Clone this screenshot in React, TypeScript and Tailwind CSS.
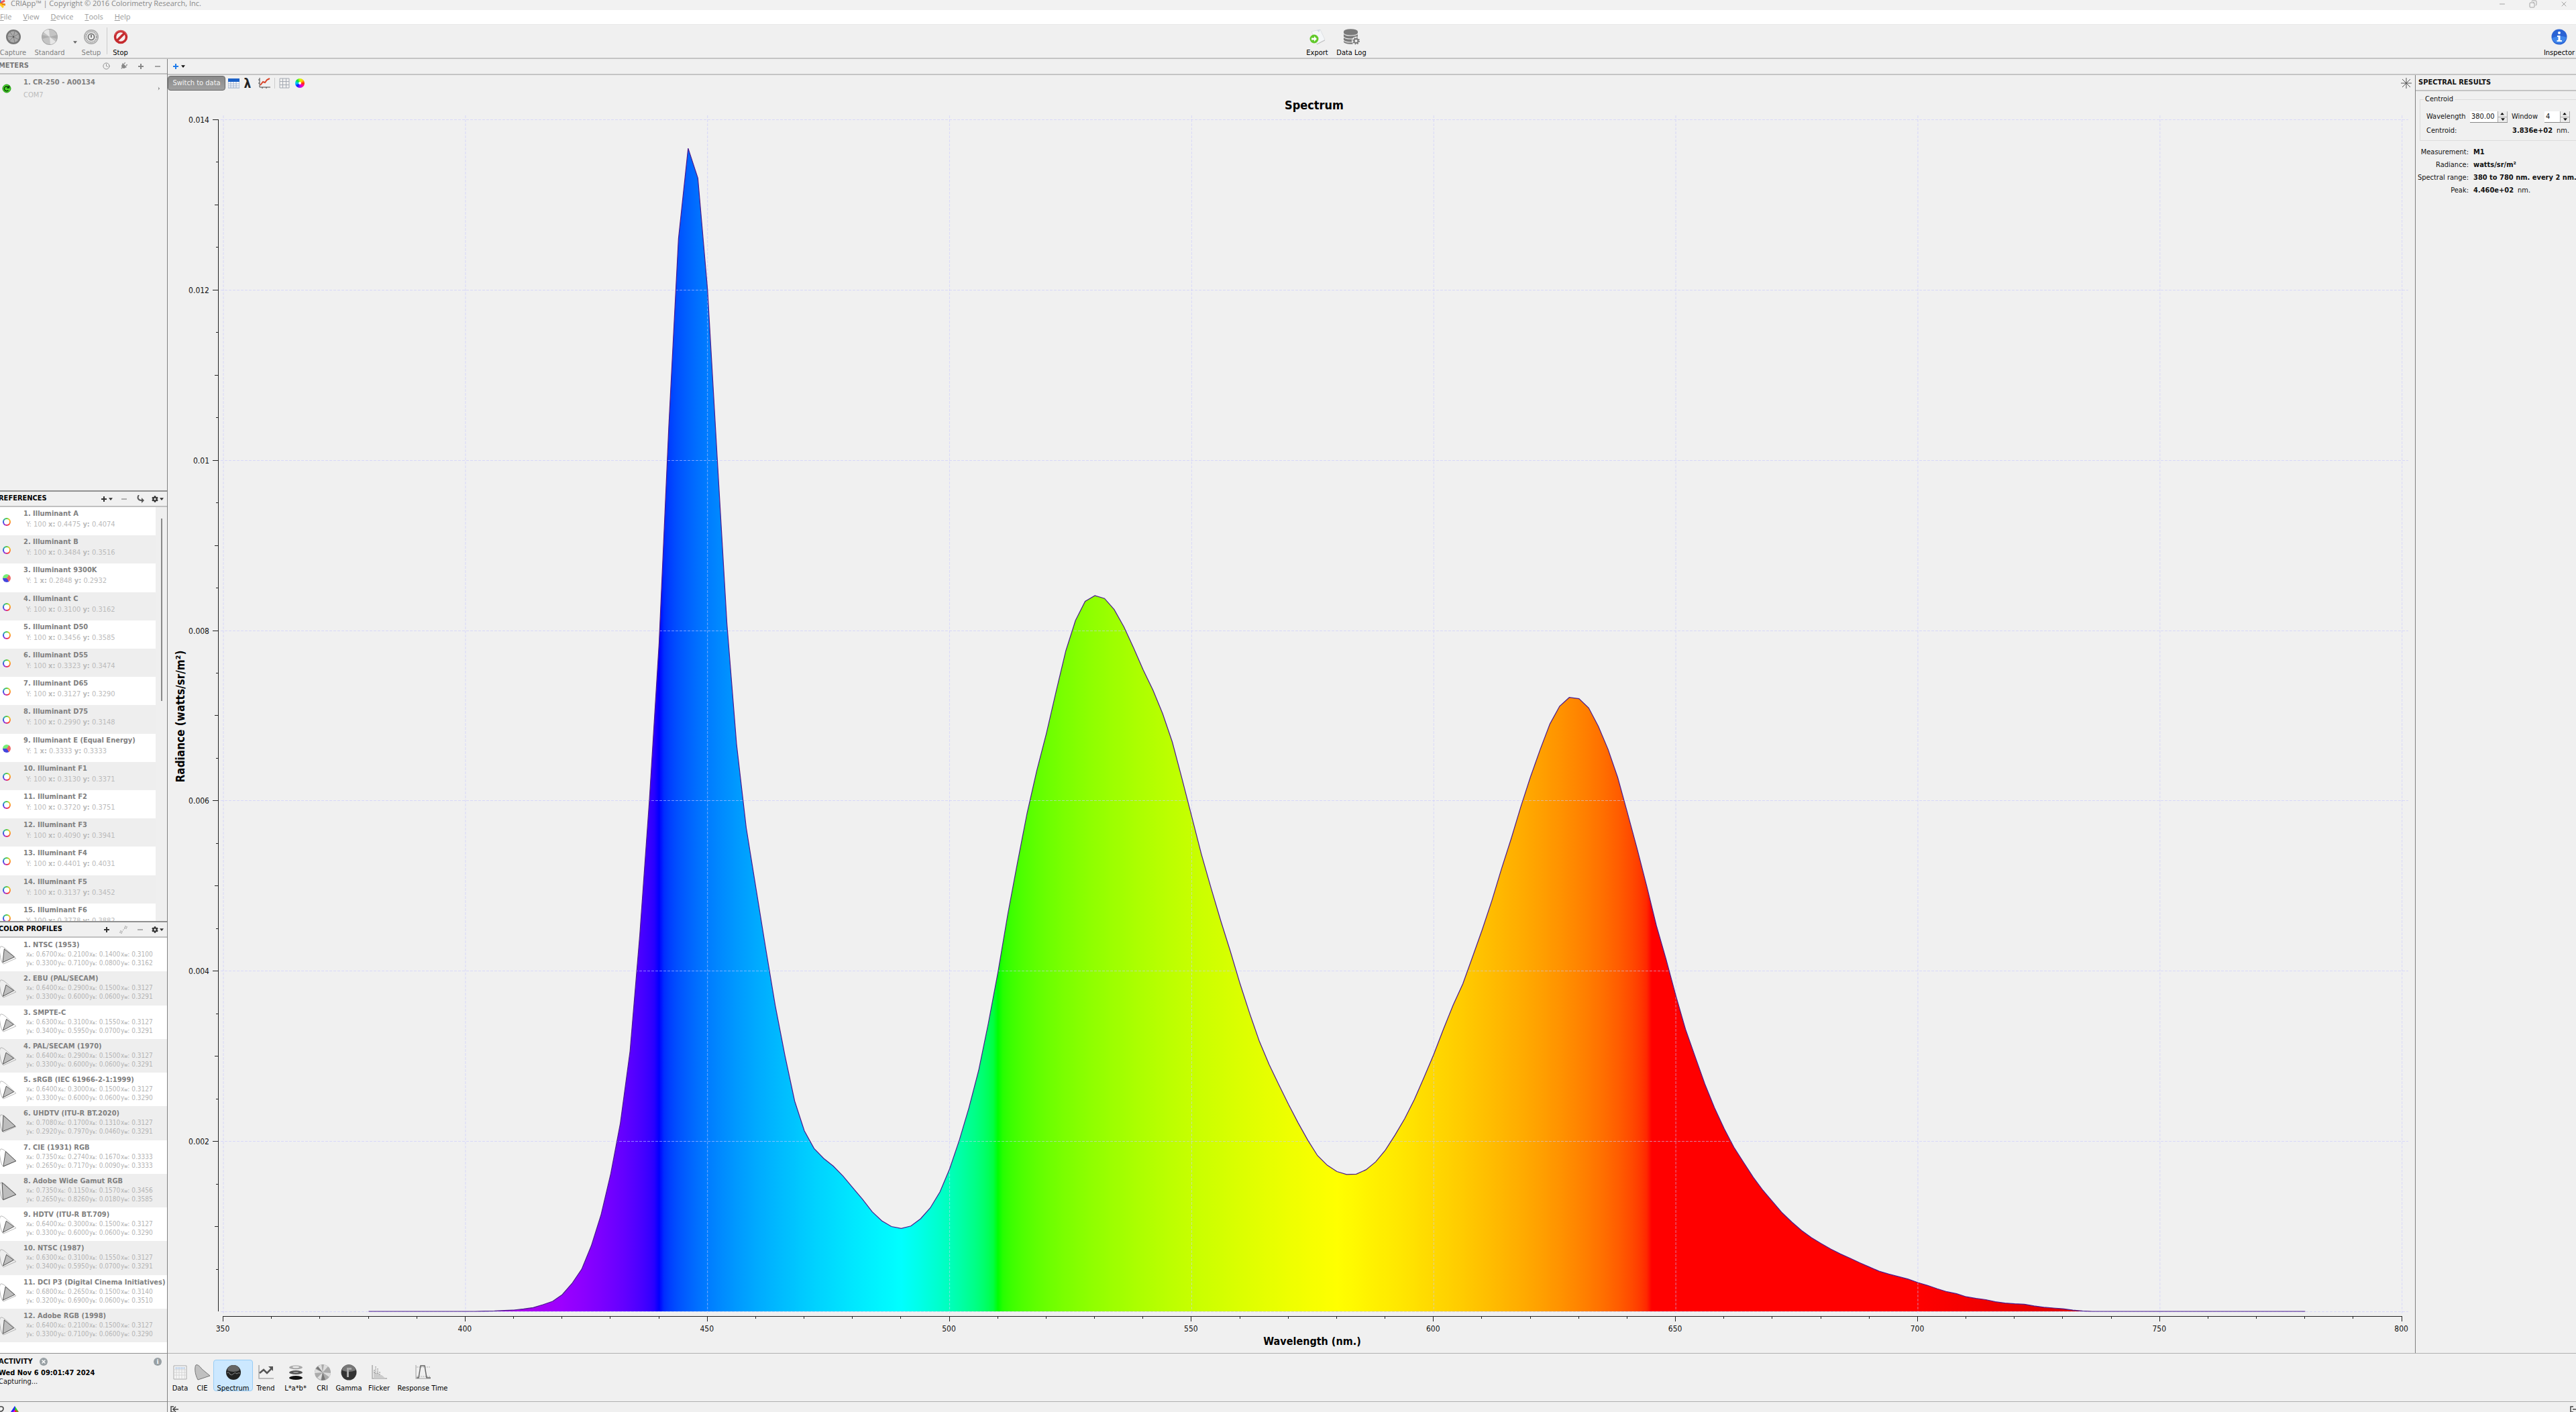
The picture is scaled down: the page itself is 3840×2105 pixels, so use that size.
import type { ReactNode } from 'react';
import { ChevronRight, Clock, Copy, Minus, X } from 'lucide-react';
import { FaCog, FaPlug } from 'react-icons/fa';

const references = [
  ['Illuminant A', '100', '0.4475', '0.4074'],
  ['Illuminant B', '100', '0.3484', '0.3516'],
  ['Illuminant 9300K', '1', '0.2848', '0.2932'],
  ['Illuminant C', '100', '0.3100', '0.3162'],
  ['Illuminant D50', '100', '0.3456', '0.3585'],
  ['Illuminant D55', '100', '0.3323', '0.3474'],
  ['Illuminant D65', '100', '0.3127', '0.3290'],
  ['Illuminant D75', '100', '0.2990', '0.3148'],
  ['Illuminant E (Equal Energy)', '1', '0.3333', '0.3333'],
  ['Illuminant F1', '100', '0.3130', '0.3371'],
  ['Illuminant F2', '100', '0.3720', '0.3751'],
  ['Illuminant F3', '100', '0.4090', '0.3941'],
  ['Illuminant F4', '100', '0.4401', '0.4031'],
  ['Illuminant F5', '100', '0.3137', '0.3452'],
  ['Illuminant F6', '100', '0.3778', '0.3882'],
];

// x then y chromaticities, in the order R, G, B, W
const profiles: { name: string; x: string[]; y: string[] }[] = [
  { name: 'NTSC (1953)', x: ['0.6700', '0.2100', '0.1400', '0.3100'], y: ['0.3300', '0.7100', '0.0800', '0.3162'] },
  { name: 'EBU (PAL/SECAM)', x: ['0.6400', '0.2900', '0.1500', '0.3127'], y: ['0.3300', '0.6000', '0.0600', '0.3291'] },
  { name: 'SMPTE-C', x: ['0.6300', '0.3100', '0.1550', '0.3127'], y: ['0.3400', '0.5950', '0.0700', '0.3291'] },
  { name: 'PAL/SECAM (1970)', x: ['0.6400', '0.2900', '0.1500', '0.3127'], y: ['0.3300', '0.6000', '0.0600', '0.3291'] },
  { name: 'sRGB (IEC 61966-2-1:1999)', x: ['0.6400', '0.3000', '0.1500', '0.3127'], y: ['0.3300', '0.6000', '0.0600', '0.3290'] },
  { name: 'UHDTV (ITU-R BT.2020)', x: ['0.7080', '0.1700', '0.1310', '0.3127'], y: ['0.2920', '0.7970', '0.0460', '0.3291'] },
  { name: 'CIE (1931) RGB', x: ['0.7350', '0.2740', '0.1670', '0.3333'], y: ['0.2650', '0.7170', '0.0090', '0.3333'] },
  { name: 'Adobe Wide Gamut RGB', x: ['0.7350', '0.1150', '0.1570', '0.3456'], y: ['0.2650', '0.8260', '0.0180', '0.3585'] },
  { name: 'HDTV (ITU-R BT.709)', x: ['0.6400', '0.3000', '0.1500', '0.3127'], y: ['0.3300', '0.6000', '0.0600', '0.3290'] },
  { name: 'NTSC (1987)', x: ['0.6300', '0.3100', '0.1550', '0.3127'], y: ['0.3400', '0.5950', '0.0700', '0.3291'] },
  { name: 'DCI P3 (Digital Cinema Initiatives)', x: ['0.6800', '0.2650', '0.1500', '0.3140'], y: ['0.3200', '0.6900', '0.0600', '0.3510'] },
  { name: 'Adobe RGB (1998)', x: ['0.6400', '0.2100', '0.1500', '0.3127'], y: ['0.3300', '0.7100', '0.0600', '0.3290'] },
];

const locus = [
  [0.174, 0.005], [0.144, 0.03], [0.124, 0.058], [0.091, 0.133], [0.045, 0.295], [0.008, 0.538],
  [0.004, 0.655], [0.014, 0.75], [0.039, 0.812], [0.074, 0.834], [0.155, 0.806], [0.23, 0.754],
  [0.302, 0.692], [0.373, 0.624], [0.512, 0.487], [0.627, 0.372], [0.735, 0.265],
];

// radiance in mW/sr/m² every 2 nm, starting at 400 nm
const FIRST_NM = 400;
const radiance = [
  0, 0, 0.002, 0.005, 0.01, 0.016, 0.028, 0.045, 0.079, 0.118, 0.197, 0.327, 0.495, 0.771, 1.132, 1.616,
  2.213, 3.057, 4.42, 6.013, 7.85, 10.4, 12.6, 13.66, 13.31, 12.0, 10.03, 8.08, 6.66, 5.68, 4.97, 4.27,
  3.59, 3.0, 2.47, 2.122, 1.914, 1.796, 1.706, 1.588, 1.453, 1.318, 1.171, 1.064, 0.997, 0.974, 1.002,
  1.087, 1.216, 1.402, 1.672, 2.01, 2.393, 2.832, 3.384, 3.986, 4.66, 5.265, 5.85, 6.351, 6.79, 7.28,
  7.759, 8.114, 8.339, 8.406, 8.373, 8.243, 8.04, 7.793, 7.534, 7.297, 7.021, 6.689, 6.256, 5.816, 5.372,
  4.972, 4.589, 4.229, 3.846, 3.497, 3.17, 2.9, 2.663, 2.432, 2.213, 2.01, 1.83, 1.717, 1.643, 1.608,
  1.613, 1.663, 1.756, 1.894, 2.071, 2.263, 2.489, 2.75, 3.02, 3.315, 3.596, 3.847, 4.161, 4.481, 4.825,
  5.199, 5.553, 5.932, 6.281, 6.601, 6.901, 7.108, 7.211, 7.196, 7.088, 6.872, 6.601, 6.271, 5.858, 5.435,
  4.993, 4.53, 4.132, 3.709, 3.315, 2.991, 2.671, 2.391, 2.145, 1.928, 1.751, 1.574, 1.422, 1.289, 1.156,
  1.048, 0.949, 0.866, 0.797, 0.733, 0.674, 0.625, 0.571, 0.521, 0.472, 0.438, 0.408, 0.379, 0.339, 0.305,
  0.266, 0.231, 0.207, 0.172, 0.152, 0.138, 0.113, 0.098, 0.089, 0.084, 0.064, 0.049, 0.039, 0.03, 0.015,
  0.005, 0,
];

const toX = (nm: number) => 83 + (nm - 350) * 7.217;
const toY = (value: number) => 1783 - value * 126.93;

const wavelengthColor = (nm: number) => {
  let r = 0;
  let g = 0;
  let b = 0;
  if (nm < 440) {
    r = (440 - nm) / 60;
    b = 1;
  } else if (nm < 490) {
    g = (nm - 440) / 50;
    b = 1;
  } else if (nm < 510) {
    g = 1;
    b = (510 - nm) / 20;
  } else if (nm < 580) {
    r = (nm - 510) / 70;
    g = 1;
  } else if (nm < 645) {
    r = 1;
    g = (645 - nm) / 65;
  } else {
    r = 1;
  }
  let fade = 1;
  if (nm < 420) fade = 0.3 + (0.7 * (nm - 380)) / 40;
  if (nm > 700) fade = 0.3 + (0.7 * (780 - nm)) / 80;
  const channel = (c: number) => Math.round(255 * Math.pow(c * fade, 0.45));
  return `rgb(${channel(r)},${channel(g)},${channel(b)})`;
};

const range = (from: number, to: number, step: number) =>
  Array.from({ length: Math.round((to - from) / step) + 1 }, (_, i) => from + i * step);

const Spectrum = () => {
  const points = radiance.map((v, i) => `${toX(FIRST_NM + i * 2).toFixed(1)},${toY(v).toFixed(1)}`).join(' ');
  const line = `${toX(380)},1783 ${points} ${toX(780)},1783`;

  return (
    <svg viewBox="0 0 3350 1845" className="min-h-0 w-full flex-1" role="img" aria-label="Spectrum chart">
      <defs>
        <linearGradient id="visible" gradientUnits="userSpaceOnUse" x1={toX(380)} y1="0" x2={toX(780)} y2="0">
          {range(380, 780, 1).map((nm) => (
            <stop key={nm} offset={(nm - 380) / 400} stopColor={wavelengthColor(nm)} />
          ))}
        </linearGradient>
      </defs>
      <polygon points={line} fill="url(#visible)" />

      {/* grid */}
      <g stroke="#c8c8ff" strokeOpacity="0.6" strokeDasharray="4 2" strokeWidth="1">
        {range(350, 800, 50).map((nm) => (
          <line key={nm} x1={toX(nm)} x2={toX(nm)} y1="0" y2="1787" />
        ))}
        {range(0, 14, 2).map((v) => (
          <line key={v} x1="79" x2="3340" y1={Math.round(toY(v)) + 0.5} y2={Math.round(toY(v)) + 0.5} />
        ))}
      </g>
      <polyline points={line} fill="none" stroke="#4b1a8e" strokeWidth="1.2" />

      {/* axes */}
      <g stroke="#222" strokeWidth="1">
        <line x1="75.5" x2="75.5" y1="6" y2="1783" />
        {range(0.5, 14, 0.5).map((v) => (
          <line key={v} x1={v % 2 === 0 ? 67 : v % 1 === 0 ? 70 : 72} x2="76" y1={Math.round(toY(v)) + 0.5} y2={Math.round(toY(v)) + 0.5} />
        ))}
        <line x1={toX(350)} x2={toX(800)} y1="1790.5" y2="1790.5" />
        {range(350, 800, 10).map((nm) => (
          <line key={nm} x1={Math.round(toX(nm)) - 0.5} x2={Math.round(toX(nm)) - 0.5} y1="1790" y2={nm % 50 === 0 ? 1798 : 1794} />
        ))}
      </g>
      <g className="fill-[#111] text-[12px]">
        {range(2, 14, 2).map((v) => (
          <text key={v} x="62" y={toY(v) + 5} textAnchor="end">{String(v / 1000)}</text>
        ))}
        {range(350, 800, 50).map((nm) => (
          <text key={nm} x={toX(nm) - 1} y="1813" textAnchor="middle">{nm}</text>
        ))}
      </g>
      <g className="fill-black text-[16px] font-bold">
        <text x="1706" y="1833" textAnchor="middle">Wavelength (nm.)</text>
        <text transform="translate(25 896) rotate(-90)" textAnchor="middle" className="text-[17px]">Radiance (watts/sr/m²)</text>
      </g>
    </svg>
  );
};

const Caret = () => (
  <svg viewBox="0 0 8 5" className="h-1 w-1.5 shrink-0"><path d="M0 0h8L4 5z" fill="currentColor" /></svg>
);

const Plus = () => (
  <svg viewBox="0 0 10 10" className="size-2.5"><path d="M5 1v8M1 5h8" stroke="currentColor" strokeWidth="2" /></svg>
);

const Dash = () => (
  <svg viewBox="0 0 10 10" className="size-2.5"><path d="M1 5h8" stroke="currentColor" strokeWidth="1.5" /></svg>
);

const RingIcon = () => (
  <span className="block size-3 rounded-full bg-[conic-gradient(#5c4,#ec2,#f83,#f33,#a3c,#44e,#2aa,#5c4)] p-0.5">
    <span className="block size-2 rounded-full bg-white" />
  </span>
);

const PieIcon = () => (
  <span className="block size-3 rounded-full bg-[conic-gradient(#7e7_0_35deg,#e66_35deg_145deg,#44d_145deg_270deg,#7e7_270deg)]" />
);

const GamutIcon = ({ x, y }: { x: string[]; y: string[] }) => {
  const place = (px: number, py: number) => `${(px * 33.3 - 0.7).toFixed(1)},${(39.2 - py * 31.7).toFixed(1)}`;
  const triangle = [0, 1, 2].map((i) => place(Number(x[i]), Number(y[i]))).join(' ');
  return (
    <svg viewBox="0 0 35 50" className="h-[50px] w-[35px] shrink-0">
      <polygon points={locus.map(([a, b]) => place(a, b)).join(' ')} fill="none" stroke="#999" strokeWidth="0.7" />
      <polygon points={triangle} fill="#bdbdbd" stroke="#333" strokeWidth="0.8" />
    </svg>
  );
};

const ToolButton = ({ label, width, dim, children }: { label: string; width: string; dim?: boolean; children: ReactNode }) => (
  <button className={`flex h-[49px] shrink-0 flex-col items-center gap-1 pt-1.5 leading-4 whitespace-nowrap ${width} ${dim ? 'text-[#808080]' : 'text-black'}`}>
    <svg viewBox="0 0 24 24" className="size-6 shrink-0">{children}</svg>
    {label}
  </button>
);

const PanelHeader = ({ title, dim, children }: { title: string; dim?: boolean; children?: ReactNode }) => (
  <header className="flex h-[23px] shrink-0 items-center justify-between overflow-hidden border-b-2 border-[#c0c0c0] pr-[5px]">
    <h2 className={`-ml-0.5 font-bold ${dim ? 'text-[#777]' : 'text-black'}`}>{title}</h2>
    <div className="flex items-center">{children}</div>
  </header>
);

const AppToolbar = () => (
  <div className="flex h-[51px] shrink-0 items-start border-b-2 border-[#c4c4c4]">
    <div className="flex flex-1 items-start">
      <ToolButton label="Capture" width="w-[39px]" dim>
        <circle cx="12" cy="12" r="11" fill="#777" />
        <circle cx="12" cy="12" r="8.5" fill="#aaa" />
        <path d="M12 12 14 4M12 12l7-4M12 12l8 4M12 12l2 8M12 12l-6 6M12 12l-8-1M12 12 7 5" stroke="#777" strokeWidth="0.8" />
        <circle cx="12" cy="12" r="1" fill="#444" />
      </ToolButton>
      <ToolButton label="Standard" width="w-[70px]" dim>
        <circle cx="12" cy="12" r="12" fill="#a5a5a5" />
        <circle cx="12" cy="12" r="11" fill="#c4c4c4" />
        <path d="M12 12 3 5a11 11 0 0 1 8-4zM12 12l9 7a11 11 0 0 1-8 4z" fill="#e6e6e6" />
        <path d="M12 12 23 9v6zM12 12 1 15V9z" fill="#adadad" />
      </ToolButton>
      <button className="mt-6 w-2 text-[#666]" aria-label="Standard options"><Caret /></button>
      <ToolButton label="Setup" width="w-[38px]" dim>
        <circle cx="12" cy="12" r="11" fill="#aaa" />
        <circle cx="12" cy="12" r="9.5" fill="#ddd" />
        <circle cx="12" cy="12" r="8" fill="none" stroke="#777" strokeDasharray="2 1" />
        <circle cx="12" cy="12" r="4.5" fill="#eee" stroke="#666" strokeWidth="1.5" />
        <path d="M12 9v4" stroke="#555" strokeWidth="1.5" />
      </ToolButton>
      <span className="mt-1 ml-1 h-10 w-px bg-[#ccc]" />
      <ToolButton label="Stop" width="w-[39px]">
        <circle cx="12" cy="12" r="8.5" fill="#f6eeee" stroke="#c52a2e" strokeWidth="3.5" />
        <path d="m6 18 12-12" stroke="#c52a2e" strokeWidth="3.5" />
        <path d="M3.500 9a9 9 0 0 1 17 0" stroke="#e0686a" strokeWidth="1" fill="none" />
      </ToolButton>
    </div>
    <div className="ml-[143px] flex">
      <ToolButton label="Export" width="w-[46px]">
        <path d="m3 4 13-3 7 15-12 7z" fill="#f4f6f8" stroke="#d5d8dc" strokeWidth="0.7" />
        <path d="m11 2 3 3 2-4z" fill="#cfd8e4" />
        <path d="m11 23 12-6" stroke="#bbb" />
        <circle cx="7" cy="15" r="6.500" fill="#62c92c" />
        <path d="M3 13.500h4V11l4 4-4 4v-2.500H3z" fill="#fff" />
      </ToolButton>
      <ToolButton label="Data Log" width="w-[56px]">
        <path d="M0 4v15c0 5 21 5 21 0V4z" fill="#7a7a7a" />
        <path d="M0 7c2 4 19 4 21 0M0 12c2 4 19 4 21 0M0 17c2 4 19 4 21 0" stroke="#f0f0f0" strokeWidth="1.200" fill="none" />
        <ellipse cx="10.500" cy="4" rx="10.500" ry="3.800" fill="#7a7a7a" />
        <circle cx="18.500" cy="18" r="6.500" fill="#f0f0f0" />
        <circle cx="18.500" cy="18" r="3" fill="none" stroke="#7a7a7a" strokeWidth="2" />
        <circle cx="18.500" cy="18" r="4.500" fill="none" stroke="#7a7a7a" strokeWidth="2" strokeDasharray="1.770" />
      </ToolButton>
    </div>
    <div className="flex flex-1 justify-end">
      <ToolButton label="Inspector" width="w-[50px]">
        <circle cx="12" cy="12" r="11.500" fill="#2a63d4" />
        <path d="M1 14a11.500 11.500 0 0 0 22-1c-7-3-15-3-22 1z" fill="#3f86ea" />
        <circle cx="12" cy="6" r="2" fill="#fff" />
        <path d="M9 10h4.500v7H16v2H8.500v-2h2v-5H9z" fill="#fff" />
      </ToolButton>
    </div>
  </div>
);

const Sidebar = () => (
  <aside className="flex w-[250px] shrink-0 flex-col overflow-hidden border-r border-[#808080]">
    <section className="flex min-h-0 flex-1 flex-col">
      <PanelHeader title="METERS" dim>
        <div className="flex items-center gap-[15px] pr-1 text-[#888]">
          <button aria-label="History"><Clock className="size-[11px]" /></button>
          <button aria-label="Connect"><FaPlug className="size-[11px] rotate-45" /></button>
          <button aria-label="Add meter"><Plus /></button>
          <button aria-label="Remove meter"><Dash /></button>
        </div>
      </PanelHeader>
      <div className="flex h-[42px] items-center">
        <svg viewBox="0 0 14 14" className="mr-[18px] ml-[3px] size-3.5 shrink-0">
          <circle cx="7" cy="7" r="6" fill="#4fdc2c" stroke="#1f9a14" />
          <path d="M9.500 9.500A3.500 3.500 0 1 1 10 5.500M10.500 2.500v3.500H7" stroke="#0a3d08" strokeWidth="1.500" fill="none" />
        </svg>
        <div className="flex-1">
          <p className="leading-5 font-bold text-[#808080]">1. CR-250 - A00134</p>
          <p className="leading-[18px] text-[#bbb]">COM7</p>
        </div>
        <ChevronRight className="mr-2 size-2 fill-[#999] text-[#999]" />
      </div>
    </section>

    <section className="flex h-[642px] shrink-0 flex-col border-t-2 border-[#909090]">
      <PanelHeader title="REFERENCES">
        <div className="flex items-center text-[#333]">
          <button className="flex items-center gap-0.5" aria-label="Add reference"><Plus /><Caret /></button>
          <button className="ml-3 text-[#999]" aria-label="Remove reference"><Dash /></button>
          <button className="ml-3.5" aria-label="Load">
            <svg viewBox="0 0 12 12" className="size-3"><path d="M3 0C0 4 2 8 7 8" stroke="#555" strokeWidth="2" fill="none" /><path d="M7 4v8l4-4z" fill="#555" /></svg>
          </button>
          <button className="ml-2.5 flex items-center gap-0.5" aria-label="Reference settings"><FaCog className="size-2.5" /><Caret /></button>
        </div>
      </PanelHeader>
      <div className="flex min-h-0 flex-1 overflow-hidden">
        <ul className="grid h-[633px] flex-1 auto-rows-fr bg-white">
          {references.map(([name, lum, x, y], i) => (
            <li key={name} className="flex items-start even:bg-[#eeeeee]">
              <span className="mr-[19px] ml-1 pt-4">{lum === '1' ? <PieIcon /> : <RingIcon />}</span>
              <div className="pt-0.5 whitespace-nowrap">
                <p className="leading-4 font-bold text-[#808080]">{i + 1}. {name}</p>
                <p className="pl-1 leading-4 text-[#bbb]">Y: {lum} <b>x:</b> {x} <b>y:</b> {y}</p>
              </div>
            </li>
          ))}
        </ul>
        <div className="w-[17px] bg-[#efefef] pt-[17px] pl-2">
          <div className="h-[272px] w-0.5 bg-[#888]" />
        </div>
      </div>
    </section>

    <section className="flex h-[644px] shrink-0 flex-col border-t-2 border-[#909090]">
      <PanelHeader title="COLOR PROFILES">
        <div className="flex items-center text-[#333]">
          <button aria-label="Add profile"><Plus /></button>
          <button className="ml-3.5" aria-label="Expand">
            <svg viewBox="0 0 12 12" className="size-3"><path d="M8 1h3v3H8zM1 8h3v3H1zM5 7l3-3" stroke="#999" strokeDasharray="2 1" fill="none" /></svg>
          </button>
          <button className="ml-3.5 text-[#999]" aria-label="Remove profile"><Dash /></button>
          <button className="ml-3 flex items-center gap-0.5" aria-label="Profile settings"><FaCog className="size-2.5" /><Caret /></button>
        </div>
      </PanelHeader>
      <div className="flex-1 bg-white">
        <ul className="grid h-[603px] auto-rows-fr">
          {profiles.map(({ name, x, y }, i) => (
            <li key={name} className="flex overflow-hidden even:bg-[#eeeeee]">
              <GamutIcon x={x} y={y} />
              <div className="pt-[3px] whitespace-nowrap">
                <p className="leading-4 font-bold text-[#808080]">{i + 1}. {name}</p>
                <div className="grid grid-cols-[repeat(4,47px)] pl-1 text-[10px] leading-[11px] text-[#b4b4b4]">
                  {x.map((v, j) => (
                    <span key={j}>x<b className="text-[5px]">{'RGBW'[j]}</b>: {v}</span>
                  ))}
                  {y.map((v, j) => (
                    <span key={j}>y<b className="text-[5px]">{'RGBW'[j]}</b>: {v}</span>
                  ))}
                </div>
              </div>
            </li>
          ))}
        </ul>
      </div>
    </section>

    <section className="h-[73px] shrink-0 border-t border-b border-[#909090] pt-[5px]">
      <header className="flex h-[14px] items-center">
        <h2 className="-ml-0.5 font-bold">ACTIVITY</h2>
        <button className="ml-2.5 grid size-3 place-items-center rounded-full bg-[#98a0a4] text-white" aria-label="Cancel"><X className="size-2 stroke-[4px]" /></button>
        <button className="mr-2 ml-auto grid size-3 place-items-center rounded-full bg-[#98a0a4] font-serif text-[10px] leading-3 font-bold text-white" aria-label="Information">i</button>
      </header>
      <p className="-ml-0.5 pt-[3px] leading-[14px] font-bold text-black">Wed Nov 6 09:01:47 2024</p>
      <p className="-ml-0.5 leading-3">Capturing...</p>
    </section>
    <div className="flex h-[15px] shrink-0 items-end gap-2.5 overflow-hidden">
      <svg viewBox="0 0 6 9" className="h-[9px] w-1.5"><path d="M0 1h2q3 0 3 3T2 8H0" stroke="#444" strokeWidth="1.500" fill="none" /></svg>
      <span className="h-[9px] w-3 bg-[conic-gradient(from_180deg_at_50%_60%,#f0f_0_10deg,#22f_60deg,#22f_180deg,#2c2_200deg,#2d2_260deg,#f22_350deg)] [clip-path:polygon(50%_0,100%_100%,0_100%)]" />
    </div>
  </aside>
);

const ChartToolbar = () => (
  <div className="flex h-6 shrink-0 items-center">
    <button className="h-[22px] w-[86px] rounded-sm border border-[#666] bg-linear-to-b from-[#8a8a8a] to-[#a0a0a0] whitespace-nowrap text-[#f4f4f4]">Switch to data</button>
    <button className="ml-1" aria-label="Table">
      <svg viewBox="0 0 17 15" className="h-[15px] w-[17px]">
        <path d="M0 1h17v13H0z" fill="#fff" stroke="#8aa0c0" /><path d="M0 0h17v5H0z" fill="#1c62c8" /><path d="M0 8h17M0 11h17M4 5v9M8 5v9M12 5v9" stroke="#9fb0cc" />
      </svg>
    </button>
    <button className="ml-1.5 w-3 text-[19px] leading-5 font-bold text-[#222]" aria-label="Wavelength">λ</button>
    <button className="ml-2.5" aria-label="Plot">
      <svg viewBox="0 0 18 16" className="h-4 w-[18px]"><path d="M2 0v14h16M0 3h2M0 8h2M6 14v2M12 14v2" stroke="#444" fill="none" /><path d="m3 11 4-5 3 1 3-4 4-2" stroke="#d8452a" strokeWidth="2" fill="none" /></svg>
    </button>
    <span className="mx-1.5 h-4 w-px bg-[#ccc]" />
    <button aria-label="Grid">
      <svg viewBox="0 0 16 16" className="size-4"><path d="M1 1h14v14H1zM1 5.500h14M1 10.500h14M5.500 1v14M10.500 1v14" stroke="#a4a9b2" fill="none" /></svg>
    </button>
    <button className="ml-2 grid size-3.5 place-items-center rounded-full bg-[conic-gradient(#cf0,#fc0,#f30,#f0a,#a0f,#02f,#0cf,#0d4,#cf0)]" aria-label="Colors">
      <span className="size-1 rounded-full bg-white" />
    </button>
    <button className="mr-[5px] ml-auto text-[#555]" aria-label="Fit">
      <svg viewBox="0 0 16 16" className="size-4"><path d="M8 0v16M0 8h16M2 2l12 12M14 2 2 14" stroke="currentColor" strokeWidth="1" /></svg>
    </button>
  </div>
);

const ViewTabs = () => (
  <nav className="flex h-[73px] shrink-0 border-y border-[#b0b0b0] pt-2.5 pl-0.5">
    <ToolButton label="Data" width="w-[33px]">
      <path d="M2 2h19v20H2z" fill="#f6f6f6" stroke="#aaa" /><path d="M4 4h15v3H4z" fill="#cfe0f5" /><path d="M6 4v17M10 4v17M14 4v17M18 4v17M3 8h17M3 12h17M3 16h17" stroke="#c8c8c8" strokeWidth="0.7" />
    </ToolButton>
    <ToolButton label="CIE" width="w-[33px]">
      <path d="M5 23C0 14 0 4 2 1q3-2 9 6l12 10z" fill="#c0c0c0" stroke="#777" />
    </ToolButton>
    <div className="-mt-px h-[47px] rounded-sm border border-[#99cdf5] bg-[#cce8ff]">
      <ToolButton label="Spectrum" width="w-[57px]">
        <circle cx="12" cy="12" r="11" fill="#222" />
        <path d="M3 9a9 8 0 0 1 18 0q-9 4-18 0z" fill="#666" />
        <path d="M2 13q3-3 5 2 3 2 5-1t5 0q2-2 5-1" stroke="#888" fill="none" />
      </ToolButton>
    </div>
    <ToolButton label="Trend" width="w-[38px]">
      <path d="M2 1v20h22" stroke="#aaa" fill="none" strokeWidth="1.500" /><path d="m3 13 6-5 5 5 7-7" stroke="#555" strokeWidth="2.500" fill="none" /><path d="M16 3h7v7z" fill="#555" />
    </ToolButton>
    <ToolButton label="L*a*b*" width="w-[51px]">
      <ellipse cx="12" cy="4.500" rx="10" ry="3" fill="#a8a8a8" /><ellipse cx="12" cy="4" rx="5" ry="1.300" fill="#eee" /><ellipse cx="12" cy="12" rx="10" ry="3" fill="#555" /><ellipse cx="12" cy="12" rx="4" ry="1" fill="#999" /><ellipse cx="12" cy="20" rx="10" ry="3" fill="#111" />
    </ToolButton>
    <ToolButton label="CRI" width="w-[29px]">
      <circle cx="12" cy="12" r="12" fill="#aaa" />
      <path d="M12 12 5 3l5-3zM12 12 14 0l6 3zM12 12l12 1-2 6zM12 12 9 23l-5-3zM12 12 0 13l1-6z" fill="#dedede" />
      <path d="M12 12 2 6l3-3zM12 12l4 11-6 1z" fill="#777" />
    </ToolButton>
    <ToolButton label="Gamma" width="w-[50px]">
      <circle cx="12" cy="12" r="11.500" fill="#333" /><path d="M2 9a10 9 0 0 1 20 0q-10 4-20 0z" fill="#777" /><path d="M9 5h7v3h-4v11H9z" fill="#aaa" />
    </ToolButton>
    <ToolButton label="Flicker" width="w-[40px]">
      <path d="M2 1v20h22" stroke="#aaa" fill="none" strokeWidth="1.500" /><path d="M4 21V9l3 5 3-3 3 5 3 0 6 5z" fill="#ccc" /><path d="M5 8v6M7 3v11M10 6v8M13 11v5" stroke="#888" strokeDasharray="2 1" />
    </ToolButton>
    <ToolButton label="Response Time" width="w-[90px]">
      <path d="M2 1v20h22" stroke="#bbb" fill="none" strokeWidth="1.500" /><path d="M3 4h21M3 18h21" stroke="#aaa" strokeDasharray="2 1" /><path d="M3 20h3L9 2h6l3 18h6" stroke="#666" strokeWidth="1.500" fill="none" />
    </ToolButton>
  </nav>
);

const Spinner = ({ id, value, width }: { id: string; value: string; width: string }) => (
  <span className="flex h-[17px] border-b border-[#888] bg-white">
    <input id={id} defaultValue={value} className={`bg-white px-0.5 outline-none ${width}`} />
    <span className="flex w-[15px] flex-col border-r border-l border-[#aaa] bg-[#ececec]">
      <button className="grid flex-1 rotate-180 place-items-center" aria-label="Increase"><Caret /></button>
      <button className="grid flex-1 place-items-center border-t border-[#aaa]" aria-label="Decrease"><Caret /></button>
    </span>
  </span>
);

const ResultsPanel = () => (
  <aside className="w-60 shrink-0 overflow-hidden border-l border-[#808080] whitespace-nowrap">
    <header className="flex h-6 items-center border-b-2 border-[#c4c4c4] pl-1">
      <h2 className="font-bold">SPECTRAL RESULTS</h2>
    </header>
    <fieldset className="mt-1 ml-1.5 h-[70px] w-[260px] border border-[#dcdcdc] pl-[9px]">
      <legend className="-ml-1 px-0.5 leading-4">Centroid</legend>
      <div className="flex items-center pt-2.5">
        <label htmlFor="wavelength" className="w-[65px]">Wavelength</label>
        <Spinner id="wavelength" value="380.00" width="w-[41px]" />
        <label htmlFor="window" className="ml-1.5 w-[49px]">Window</label>
        <Spinner id="window" value="4" width="w-[23px]" />
      </div>
      <div className="flex pt-[3px] leading-[18px]">
        <span className="w-32">Centroid:</span>
        <b className="w-[66px]">3.836e+02</b>
        <span>nm.</span>
      </div>
    </fieldset>
    <dl className="grid grid-cols-[79px_auto] gap-x-[7px] pt-[7px] leading-[19px]">
      <dt className="flex justify-end">Measurement:</dt>
      <dd className="font-bold">M1</dd>
      <dt className="flex justify-end">Radiance:</dt>
      <dd className="font-bold">watts/sr/m²</dd>
      <dt className="flex justify-end">Spectral range:</dt>
      <dd className="font-bold">380 to 780 nm. every 2 nm.</dd>
      <dt className="flex justify-end">Peak:</dt>
      <dd><b className="mr-1.5">4.460e+02</b>nm.</dd>
    </dl>
  </aside>
);

export default function App() {
  return (
    <div className="flex h-screen w-full flex-col overflow-hidden bg-[#f0f0f0] font-['DejaVu_Sans_Condensed','DejaVu_Sans',sans-serif] text-[11px] text-[#111]">
      <header className="flex h-[15px] shrink-0 items-end justify-between overflow-hidden bg-[#f2f2f2] font-['Open_Sans',sans-serif] text-[#888]">
        <div className="flex h-5 items-center gap-2">
          <svg viewBox="0 0 8 16" className="h-4 w-2"><path d="m0 8 7-4" stroke="#e55" strokeWidth="3" /><path d="m0 9 8 1" stroke="#e80" strokeWidth="3" /><path d="m0 9 5 5" stroke="#fc2" strokeWidth="3" /><path d="M0 7V0" stroke="#48c" strokeWidth="3" /></svg>
          <h1 className="leading-5">CRIApp™ | Copyright © 2016 Colorimetry Research, Inc.</h1>
        </div>
        <div className="flex h-[18px] gap-[34px] pr-3">
          <button aria-label="Minimize"><Minus className="size-3 stroke-[1.5px]" /></button>
          <button aria-label="Restore"><Copy className="size-3 -scale-x-100 stroke-[1.5px]" /></button>
          <button aria-label="Close"><X className="size-3 stroke-[1.5px]" /></button>
        </div>
      </header>
      <nav className="flex h-[22px] shrink-0 items-center gap-[17px] border-b border-[#e8e8e8] bg-white font-['Open_Sans',sans-serif] text-[#999]">
        <button><u>F</u>ile</button>
        <button><u>V</u>iew</button>
        <button><u>D</u>evice</button>
        <button><u>T</u>ools</button>
        <button><u>H</u>elp</button>
      </nav>
      <AppToolbar />
      <div className="flex min-h-0 flex-1">
        <Sidebar />
        <div className="flex min-w-0 flex-1 flex-col">
          <div className="flex h-6 shrink-0 items-center border-b-2 border-[#c4c4c4] pl-[7px]">
            <button className="flex items-center gap-[3px]" aria-label="Add chart"><span className="text-[#1f7bea]"><Plus /></span><Caret /></button>
          </div>
          <div className="flex min-h-0 flex-1">
            <main className="flex min-w-0 flex-1 flex-col">
              <ChartToolbar />
              <h2 className="h-9 shrink-0 pt-[7px] pl-[68px] text-center text-[18px] leading-7 font-bold text-black">Spectrum</h2>
              <Spectrum />
            </main>
            <ResultsPanel />
          </div>
          <ViewTabs />
          <footer className="flex h-[15px] shrink-0 items-end justify-between overflow-hidden pl-1">
            <svg viewBox="0 0 12 9" className="h-[9px] w-3"><path d="M5 1H1v8h4M4 5h8M8 1 4 5l4 4" stroke="#444" strokeWidth="1.500" fill="none" /></svg>
            <svg viewBox="0 0 9 9" className="size-[9px]"><path d="M5 1H1v8h4M4 5h5" stroke="#444" strokeWidth="1.500" fill="none" /></svg>
          </footer>
        </div>
      </div>
    </div>
  );
}
